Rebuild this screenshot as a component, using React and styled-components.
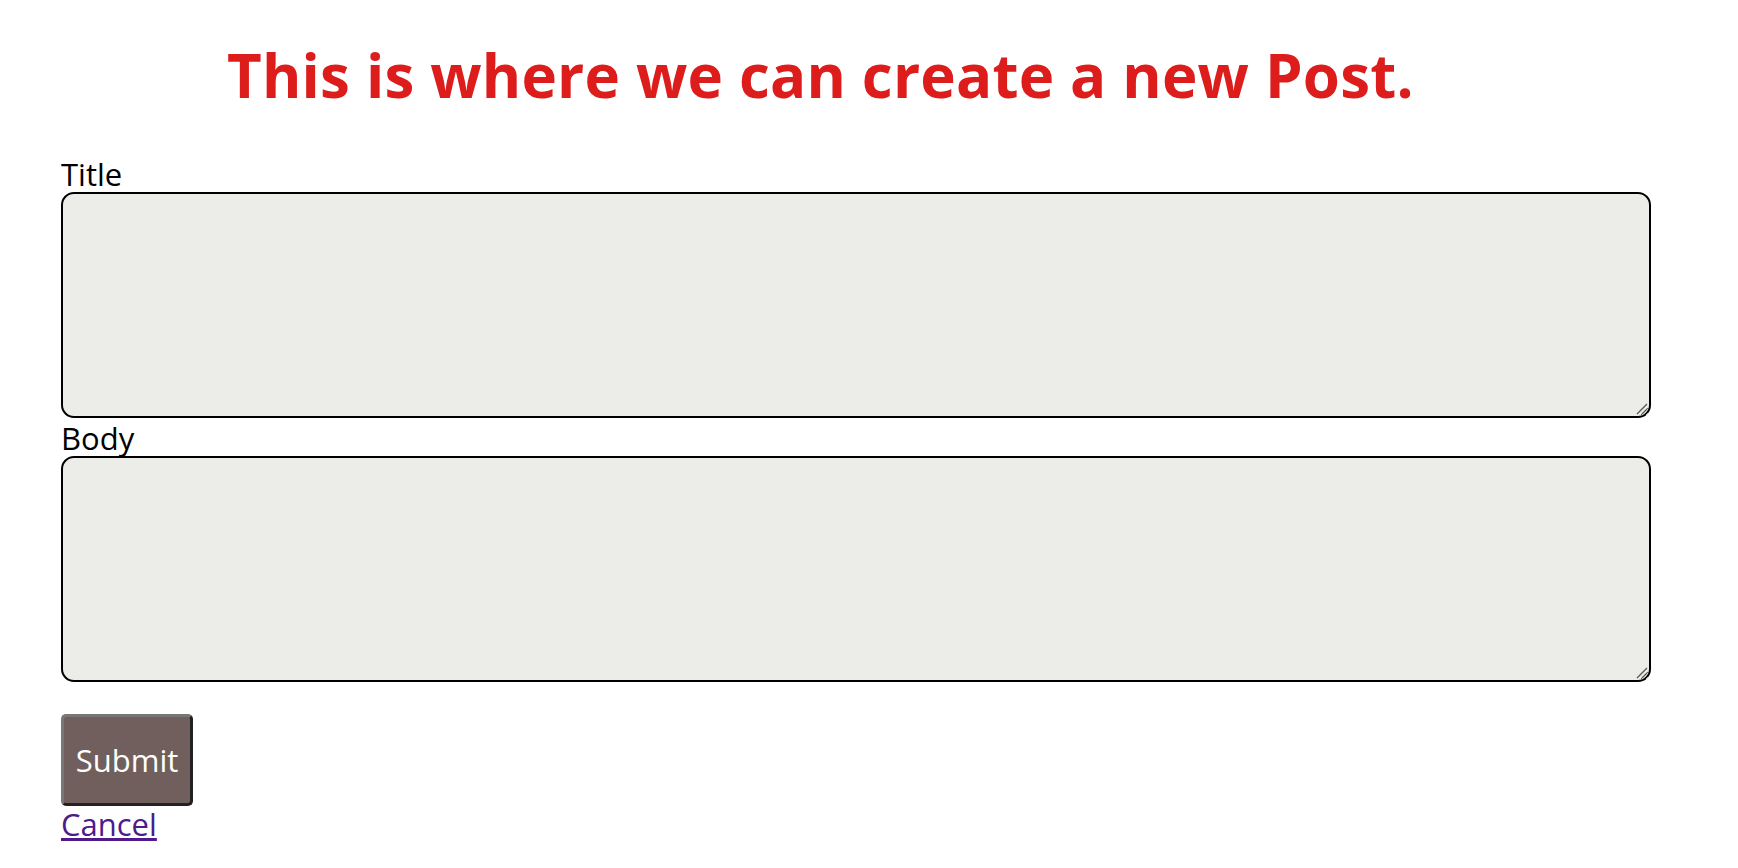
import styled, { createGlobalStyle } from "styled-components";

const GlobalStyle = createGlobalStyle`
  body {
    margin: 0;
    background: #fff;
    font-family: "Open Sans", "Noto Sans", sans-serif;
  }
`;

const ResizeGrip = () => (
  <Grip width="14" height="14" viewBox="0 0 14 14">
    <path d="M13 3 L3 13 M13 8 L8 13" stroke="#555" strokeWidth="1.3" />
  </Grip>
);

const App = () => {
  return (
    <>
      <GlobalStyle />
      <Page>
        <Heading>This is where we can create a new Post.</Heading>
        <Form onSubmit={(e) => e.preventDefault()}>
          <Label htmlFor="title">Title</Label>
          <Field>
            <TextArea id="title" />
            <ResizeGrip />
          </Field>
          <Label htmlFor="body">Body</Label>
          <Field>
            <TextArea id="body" />
            <ResizeGrip />
          </Field>
          <SubmitButton type="submit">Submit</SubmitButton>
        </Form>
        <CancelLink href="#">Cancel</CancelLink>
      </Page>
    </>
  );
};

const Page = styled.div`
  padding: 0 87px 40px 61px;
`;

const Heading = styled.h1`
  margin: 0;
  padding: 34px 0 0 166px;
  font-size: 60px;
  line-height: 82px;
  font-weight: 700;
  color: #dd1c1c;
  letter-spacing: 0.2px;
`;

const Form = styled.form`
  display: flex;
  flex-direction: column;
  align-items: flex-start;
  margin-top: 38px;
`;

const Label = styled.label`
  font-size: 31px;
  line-height: 40px;
  color: #000;
  margin-bottom: -2px;
`;

const Field = styled.div`
  position: relative;
  width: 100%;
  display: flex;
`;

const TextArea = styled.textarea`
  box-sizing: border-box;
  width: 100%;
  height: 226px;
  background: #ecece8;
  border: 2px solid #000;
  border-radius: 13px;
  font-family: inherit;
  font-size: 20px;
  padding: 8px;
  outline: none;
  resize: vertical;
`;

const Grip = styled.svg`
  position: absolute;
  right: 3px;
  bottom: 3px;
  pointer-events: none;
`;

const SubmitButton = styled.button`
  margin-top: 32px;
  width: 132px;
  height: 92px;
  background: #705f5c;
  color: #fff;
  font-family: inherit;
  font-size: 31px;
  border: 3px solid;
  border-color: #777 #222 #222 #777;
  border-radius: 5px;
  cursor: pointer;
`;

const CancelLink = styled.a`
  display: inline-block;
  font-size: 31px;
  line-height: 36px;
  color: #4f1a8b;
  text-decoration: underline;
`;

export default App;
